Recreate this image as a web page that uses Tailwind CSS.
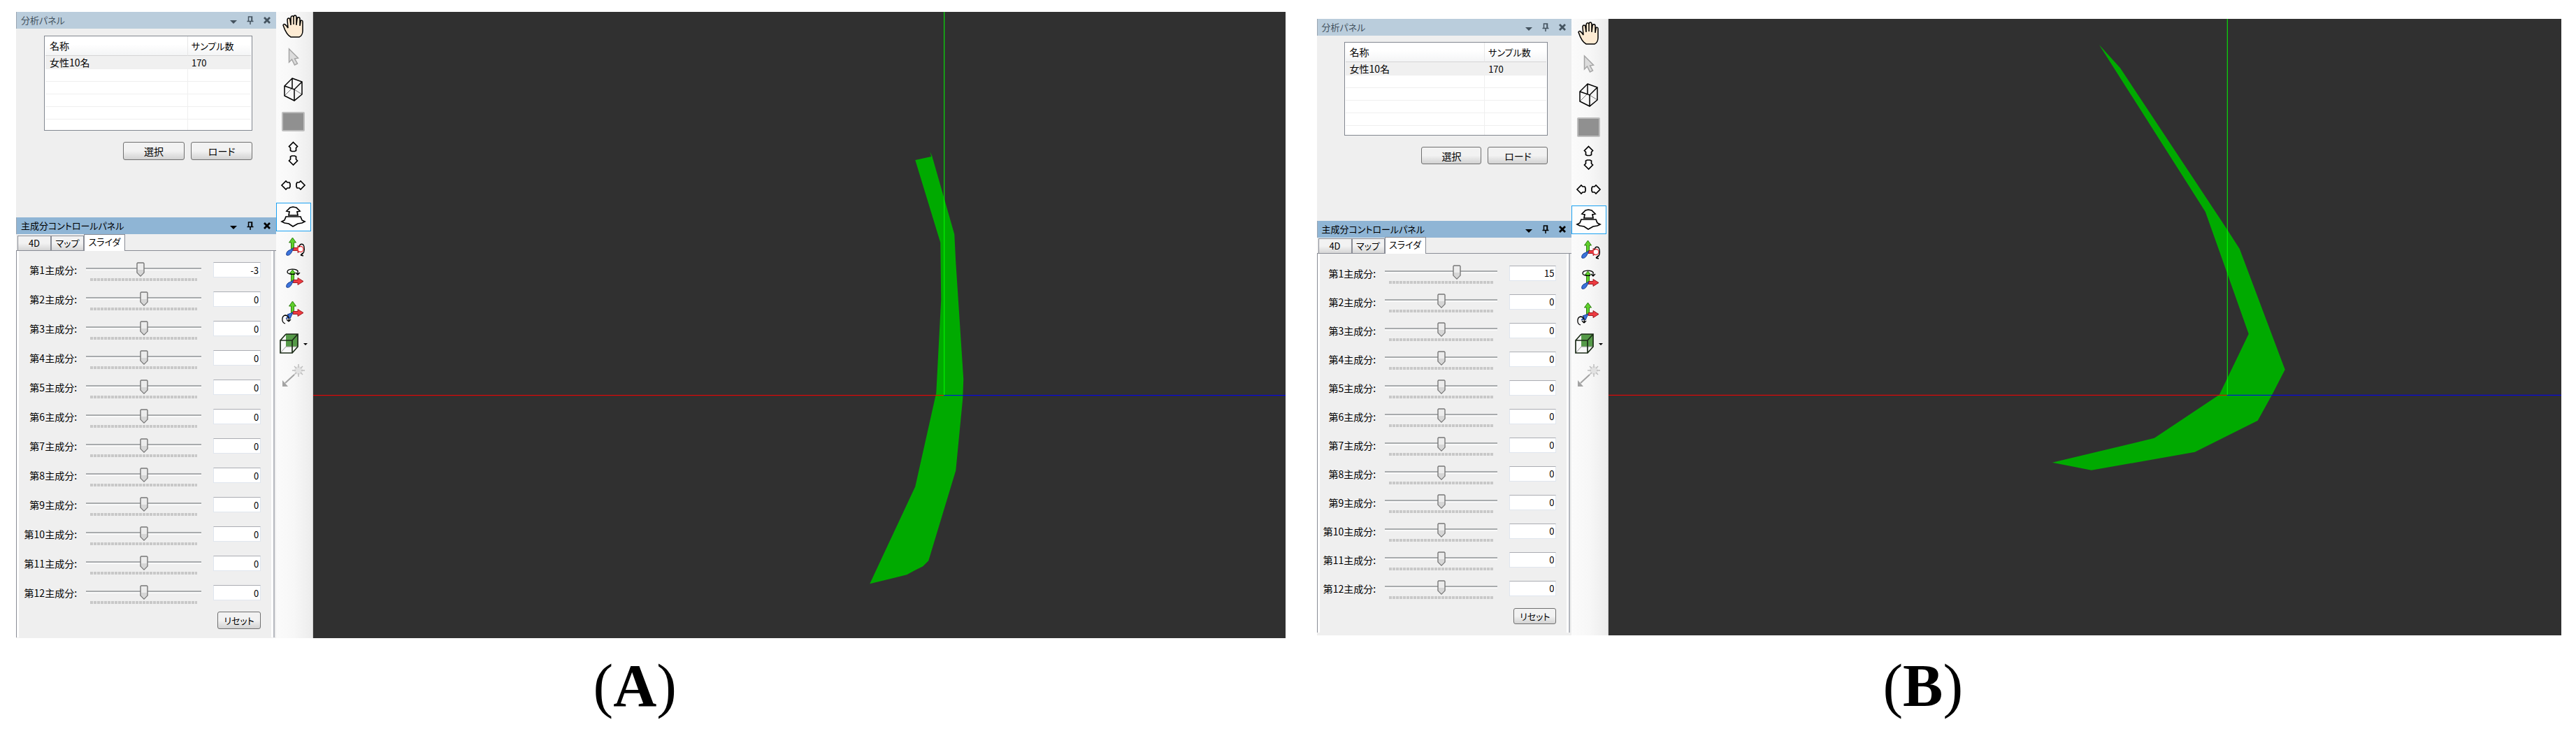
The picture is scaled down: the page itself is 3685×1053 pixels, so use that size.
<!DOCTYPE html>
<html lang="ja">
<head>
  <meta charset="UTF-8">
  <meta name="viewport" content="width=device-width, initial-scale=1.0">
  <title>主成分コントロールパネル</title>
  <script src="https://cdn.jsdelivr.net/npm/@tailwindcss/browser@4"></script>
</head>
<body class="bg-white text-black">
  <main id="views" class="grid grid-cols-2"></main>

  <script>
    const views = [
      {
        id: "A",
        first: -3,
        frame: "pt-[17px] pl-[23px] pr-[4px]",
        cols: "grid-cols-[372fr_53fr_1390fr]",
        top: "h-[270px] pt-[10px] pl-[40px] pr-[34px]",
        headRow: "h-[28px]",
        row: "h-[18px]",
        list: "h-[136px]",
        button: "w-[88px] h-[26px]",
        tabs: "h-[24px]",
        pane: "pt-[6px] pr-[15px]",
        slider: "h-[42px]",
        label: "w-[84px]",
        track: "w-[167px]",
        box: "w-[68px]",
        reset: "mt-[6px] h-[25px] w-[62px]",
        tools: "h-[541px]",
        canvas: "0 0 1390 896",
        shape: "861,212 884,207 882,200 885,206 917,318 919,358 930,525 929,553 919,656 880,785 872,793 860,799 849,805 796,818 861,679 891,545 898,412 897,330",
        cx: 902,
        cy: 548
      },
      {
        id: "B",
        first: 15,
        frame: "pt-[27px] pl-[41px] pr-[21px]",
        cols: "grid-cols-[365fr_53fr_1363fr]",
        top: "h-[265px] pt-[9px] pl-[39px] pr-[34px]",
        headRow: "h-[28px]",
        row: "h-[18px]",
        list: "h-[134px]",
        button: "w-[86px] h-[25px]",
        tabs: "h-[23px]",
        pane: "pt-[7px] pr-[15px]",
        slider: "h-[41px]",
        label: "w-[82px]",
        track: "w-[164px]",
        box: "w-[67px]",
        reset: "mt-[8px] h-[23px] w-[61px]",
        tools: "h-[531px]",
        canvas: "0 0 1363 882",
        shape: "702,37 732,70 885,301 903,329 968,502 950,537 929,575 839,620 691,646 635,635 781,600 874,538 916,451 886,366 854,276",
        cx: 885,
        cy: 538
      }
    ];

    // arrows shared by the three rotation tools
    const greenUp = '<path d="M23.500 5l5 7h-3v10h-4V12h-3z" fill="#5fd02c" stroke="#2e7d13"/>';
    const redRight = '<path d="M39 21.500l-8-5v3h-7v4h7v3z" fill="#ee3b41" stroke="#9c1c22"/>';
    const blueDown = '<path d="M25 20l-3 6c-2 4-5 5-7 4-1-3 1-6 4-7z" fill="#3b74dc" stroke="#17398c"/>';

    const tools = [
      ["手のひら", '<path d="M10 19c1-3 4-1 7 4l-1-11c0-4 4-4 4 0l1 7V9c0-4 4-4 4-1v10V8c0-4 4-4 4 0v11l1-9c0-3 4-3 4 0v10l1-6c0-3 3-2 3 0v13c0 4-2 8-5 9H21c-4-2-8-8-11-17z" fill="#fdebd3" stroke="#000" stroke-width="1.500"/>'],
      ["選択カーソル", '<path d="M18.500 8v19l4-4 4 8 4-2-4-7 5-1z" fill="#dcdcdc" stroke="#a5a5a5" stroke-width="1.500"/>'],
      ["ワイヤーフレーム", '<path d="M23 18L12 29M26 20l11 7" fill="none" stroke="#777"/><path d="M23 4l14 5v18L26 36l-14-7V15zM12 15l14 5 11-11M26 20v16M23 4v14" fill="none" stroke="#000" stroke-width="1.500"/>'],
      ["塗りつぶし", '<rect x="9" y="8" width="31" height="26" rx="1" fill="#909090" stroke="#bdbdbd" stroke-width="2"/>'],
      ["上下移動", '<path d="M24.500 4.500l6 6-2 2v4l-2 1h-4l-2-1v-4l-2-2zM24.500 37l-6-6 2-2v-4l2-1h4l2 1v4l2 2z" fill="#fff" stroke="#000" stroke-width="1.700"/>'],
      ["左右移動", '<path d="M8 21l6-6 2 2h3l1 2v4l-1 2h-3l-2 2zM41 21l-6-6-2 2h-3l-1 2v4l1 2h3l2 2z" fill="#fff" stroke="#000" stroke-width="1.700"/>'],
      ["前後移動", '<path d="M24 6l5 1 5 5-4 1 1 5H18l1-5-4-1 5-5zM14 20h21l2 5 4 2-4 2-6 1-7 4-6-4-6-1-4-2 4-2z" fill="#fff" stroke="#000" stroke-width="1.700"/>'],
      ["X軸回転", greenUp + redRight + blueDown + '<circle cx="35" cy="21.500" r="4" fill="#fff" stroke="#ee3b41" stroke-width="1.500"/><path d="M33 18c1-5 6-5 7 0s0 10-5 12m0 0l3-3m-3 3l4 1" fill="none" stroke="#000" stroke-width="1.300"/>'],
      ["Y軸回転", '<path d="M23.500 5l4 5h-2v12h-4V10h-2z" fill="#5fd02c" stroke="#2e7d13"/>' + redRight + blueDown + '<path d="M27 11c-4 1-11 0-11-3 0-5 13-5 15-1m0-1v5m-3-2l3 3 3-3" fill="none" stroke="#000" stroke-width="1.300"/>'],
      ["Z軸回転", greenUp + redRight + '<path d="M24 21l-8 3 2 1-4 5 5-2 1 2z" fill="#3b74dc" stroke="#17398c"/><path d="M13 37c-6-2-5-11 0-12 5 0 6 5 5 9m0 0l-3-3m3 3l3-3" fill="none" stroke="#000" stroke-width="1.300"/>'],
      ["表示面", '<path d="M14 6h17v18H14z" fill="#559a48"/><path d="M14 24L6 33M14 24h17" stroke="#999"/><path d="M6 15h17v18H6zM14 6h17v18l-8 9M6 15l8-9M23 15l8-9" fill="none" stroke="#1c2c18" stroke-width="1.700"/><path d="M39 19h6l-3 3z"/>'],
      ["光源", '<path d="M26 19L13 31" stroke="#a3a3a3" stroke-width="2"/><path d="M9 27v9h8z" fill="#a3a3a3"/><circle cx="32" cy="13" r="6" fill="#e2e2e2"/><path d="M32 4v5M32 17v5M23 13h5M36 13h5M26 7l3 3M35 16l3 3M38 7l-3 3M29 16l-3 3" stroke="#bdbdbd" stroke-width="1.500"/>']
    ];

    function titleBar(text, color) {
      return `
        <header class="flex h-6 items-center border-l border-[#9aa5b1] pl-[6px] ${color}">
          <h2 class="grow text-[13px] leading-5 whitespace-nowrap">${text}</h2>
          <button type="button" aria-label="メニュー" class="flex h-6 w-6 items-center justify-center"><svg class="mt-1 h-[5px] w-[10px]" viewBox="0 0 10 5" fill="currentColor"><path d="M0 0h10L5 5z"/></svg></button>
          <button type="button" aria-label="固定" class="flex h-6 w-6 items-center justify-center"><svg class="h-3 w-[10px]" viewBox="0 0 10 12" fill="none" stroke="currentColor" stroke-width="1.500"><path d="M2.500 7V1h5v6M7 1v6M0.500 7.500h9M5 8v4"/></svg></button>
          <button type="button" aria-label="閉じる" class="mr-[1px] flex h-6 w-6 items-center justify-center"><svg class="h-[10px] w-[10px]" viewBox="0 0 10 10" fill="none" stroke="currentColor" stroke-width="2.800"><path d="M1 1l8 8M9 1L1 9"/></svg></button>
        </header>`;
    }

    function slider(v, n) {
      const value = n === 1 ? v.first : 0;
      return `
        <div class="flex items-center ${v.slider}">
          <label for="r${v.id}${n}" class="text-right text-sm leading-5 whitespace-nowrap ${v.label}">第${n}主成分:</label>
          <div class="ml-[13px] pt-1 ${v.track}">
            <input type="range" id="r${v.id}${n}" min="-50" max="50" value="${value}" class="block h-[21px] w-full appearance-none bg-transparent [&::-webkit-slider-runnable-track]:h-[21px] [&::-webkit-slider-runnable-track]:bg-[linear-gradient(#a8abad_0_2px,#fafafa_2px_4px)] [&::-webkit-slider-runnable-track]:bg-[length:100%_4px] [&::-webkit-slider-runnable-track]:bg-[position:0_8px] [&::-webkit-slider-runnable-track]:bg-no-repeat [&::-webkit-slider-thumb]:h-[21px] [&::-webkit-slider-thumb]:w-[12px] [&::-webkit-slider-thumb]:appearance-none [&::-webkit-slider-thumb]:bg-[url('data:image/svg+xml,%3Csvg%20xmlns=%22http://www.w3.org/2000/svg%22%20viewBox=%220%200%2012%2021%22%3E%3Cpath%20d=%22M1%202L2%201H10L11%202V15L6%2020L1%2015Z%22%20fill=%22%23ececec%22%20stroke=%22%23777%22%20stroke-width=%221.4%22/%3E%3Cpath%20d=%22M2%2011H10V15L6%2019L2%2015Z%22%20fill=%22%23d6d6d6%22/%3E%3C/svg%3E')]">
            <div class="mx-[6px] mt-[2px] h-[4px] bg-[repeating-linear-gradient(90deg,#c8c8c8_0_4px,#efefef_4px_5px)]"></div>
          </div>
          <input type="text" value="${value}" aria-label="第${n}主成分の値" class="ml-[17px] h-[22px] border border-[#e0e6ee] border-t-[#abadb3] bg-white pr-[2px] text-right text-[13px] ${v.box}">
        </div>`;
    }

    function view(v) {
      const rows = [1, 2, 3, 4, 5, 6, 7, 8, 9, 10, 11, 12].map(n => slider(v, n)).join("");
      const cell = "border-t border-[#efefef]";
      const empty = `<tr class="${v.row}"><td class="${cell}"></td><td class="border-l ${cell}"></td></tr>`;
      const icons = tools.map(([name, art], i) => `
        <button type="button" aria-label="${name}" class="h-[41px] w-[50px] border ${i === 6 ? "border-[#1ba1f2] bg-[#fdfdfd]" : "border-transparent"}">
          <svg class="h-full w-full" viewBox="1 1 48 39">${art}</svg>
        </button>`).join("");

      return `
      <figure class="flex flex-col">
        <div class="${v.frame}">
          <div class="grid ${v.cols}">
            <div class="min-w-0 bg-[#efefef] font-['Noto_Sans_CJK_JP',sans-serif] [font-feature-settings:'palt']">
              <section>
                ${titleBar("分析パネル", "bg-[#bacddc] text-[#44535f]")}
                <div class="${v.top}">
                  <div class="overflow-hidden border border-[#828790] bg-white px-[1px] ${v.list}">
                    <table class="w-full table-fixed border-separate border-spacing-0 text-left text-sm leading-[17px]">
                      <thead>
                        <tr class="bg-linear-to-b from-white from-40% to-[#f3f4f5] ${v.headRow}">
                          <th class="w-[69%] border-b border-[#d5d5d5] pl-[6px] font-normal">名称</th>
                          <th class="border-b border-l border-[#d5d5d5] border-l-[#e8e8e8] pl-[5px] text-[13px] font-normal whitespace-nowrap">サンプル数</th>
                        </tr>
                      </thead>
                      <tbody>
                        <tr class="bg-[#f0f0f0] ${v.row}"><td class="pl-[6px]">女性10名</td><td class="pl-[6px] text-[13px]">170</td></tr>
                        ${empty}${empty}${empty}${empty}${empty}
                      </tbody>
                    </table>
                  </div>
                  <div class="mt-4 flex justify-end gap-[9px] text-sm">
                    <button type="button" class="rounded-[3px] border border-[#707070] bg-linear-to-b from-[#f2f2f2] from-50% to-[#d2d2d2] leading-5 ${v.button}">選択</button>
                    <button type="button" class="rounded-[3px] border border-[#707070] bg-linear-to-b from-[#f2f2f2] from-50% to-[#d2d2d2] leading-5 ${v.button}">ロード</button>
                  </div>
                </div>
              </section>

              <section>
                ${titleBar("主成分コントロールパネル", "bg-[#8fb5d5] text-black")}
                <nav class="flex items-end border-b border-[#898c95] pl-[2px] text-[13px] leading-5 ${v.tabs}">
                  <button type="button" class="h-[21px] w-[48px] border border-b-0 border-[#898c95] bg-linear-to-b from-[#f2f2f2] from-50% to-[#d6d6d6]">4D</button>
                  <button type="button" class="h-[21px] w-[47px] border border-b-0 border-[#898c95] bg-linear-to-b from-[#f2f2f2] from-50% to-[#d6d6d6]">マップ</button>
                  <button type="button" class="-mb-[1px] h-[24px] w-[59px] border border-b-0 border-[#898c95] bg-white pb-1">スライダ</button>
                </nav>
                <div class="mr-[2px] border-r-2 border-l border-[#b4b7be] border-l-[#898c95] bg-white px-[3px]">
                  <form class="bg-[#efefef] pb-[12px] ${v.pane}">
                    ${rows}
                    <div class="flex justify-end">
                      <button type="reset" class="rounded-[3px] border border-[#707070] bg-linear-to-b from-[#f2f2f2] from-50% to-[#d2d2d2] text-[13px] leading-5 ${v.reset}">リセット</button>
                    </div>
                  </form>
                </div>
              </section>
            </div>

            <div class="border-r border-[#d0d0d0] bg-linear-to-r from-[#fbfbfb] via-[#f7f7f7] to-[#ececec]">
              <div class="flex flex-col justify-between ${v.tools}">${icons}</div>
            </div>

            <svg class="block h-full w-full bg-[#303030]" viewBox="${v.canvas}" preserveAspectRatio="none">
              <polygon points="${v.shape}" fill="#00aa00"/>
              <rect x="0" y="${v.cy}" width="${v.cx}" height="1" fill="#f00"/>
              <rect x="${v.cx}" y="${v.cy}" width="510" height="1" fill="#00f"/>
              <rect x="${v.cx}" y="0" width="1" height="${v.cy}" fill="#0f0"/>
            </svg>
          </div>
        </div>
        <figcaption class="mt-auto pt-[18px] pr-[26px] text-center font-['Liberation_Serif',serif] text-[86px] leading-[100px]">(<b>${v.id}</b>)</figcaption>
      </figure>`;
    }

    document.getElementById("views").innerHTML = views.map(view).join("");
  </script>
</body>
</html>
